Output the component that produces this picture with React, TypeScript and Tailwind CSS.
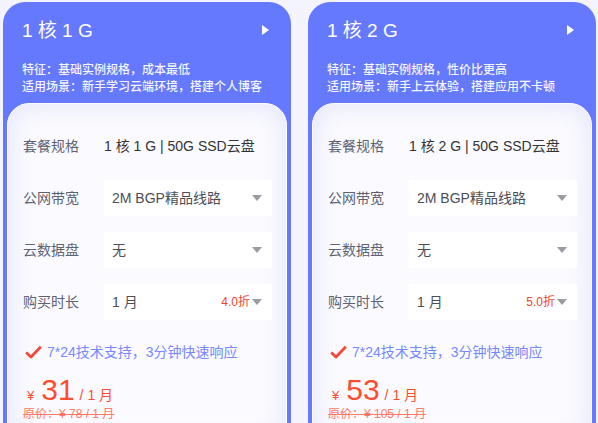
import React from 'react'

interface Plan {
  title: string
  feature: string
  scene: string
  spec: string
  discount: string
  price: string
  original: string
}

const plans: Plan[] = [
  {
    title: '1 核 1 G',
    feature: '特征：基础实例规格，成本最低',
    scene: '适用场景：新手学习云端环境，搭建个人博客',
    spec: '1 核 1 G | 50G SSD云盘',
    discount: '4.0折',
    price: '31',
    original: '原价：¥ 78 / 1 月',
  },
  {
    title: '1 核 2 G',
    feature: '特征：基础实例规格，性价比更高',
    scene: '适用场景：新手上云体验，搭建应用不卡顿',
    spec: '1 核 2 G | 50G SSD云盘',
    discount: '5.0折',
    price: '53',
    original: '原价：¥ 105 / 1 月',
  },
]

function Caret() {
  return (
    <svg width="10" height="6" viewBox="0 0 10 6" className="shrink-0">
      <path d="M0 0 L10 0 L5 6 Z" fill="#9a9ca3" />
    </svg>
  )
}

function SelectBox({ value, extra }: { value: string; extra?: string }) {
  return (
    <div className="flex items-center w-[168px] h-[36px] bg-white pl-[8px] pr-[10px]">
      <span className="flex-1 text-[14px] text-[#4b4e57]">{value}</span>
      {extra && <span className="text-[12px] text-[#f0432f] mr-[2px]">{extra}</span>}
      <Caret />
    </div>
  )
}

function Row({ label, children }: { label: string; children: React.ReactNode }) {
  return (
    <div className="flex items-center h-[36px]">
      <span className="w-[81px] text-[14px] text-[#5d6275]">{label}</span>
      {children}
    </div>
  )
}

function PlanCard({ plan }: { plan: Plan }) {
  return (
    <div className="flex-1 bg-[#6579fe] rounded-t-[22px] px-[4px] flex flex-col">
      <div className="relative pt-[15px] pl-[15px] pb-[7px] text-white">
        <div className="text-[19px] leading-[28px]">{plan.title}</div>
        <svg width="7" height="10" viewBox="0 0 7 10" className="absolute right-[18px] top-[23px]">
          <path d="M0 0 L7 5 L0 10 Z" fill="#ffffff" />
        </svg>
        <div className="mt-[17px] text-[12px] leading-[17px] font-medium text-white/95">
          <div>{plan.feature}</div>
          <div>{plan.scene}</div>
        </div>
      </div>
      <div className="flex-1 rounded-t-[22px] border border-white bg-[#fbfbff] shadow-[inset_0_0_28px_rgba(110,115,230,0.18)] pt-[24px] pl-[15px] pr-[14px] pb-[20px]">
        <div className="flex flex-col gap-[16px]">
          <Row label="套餐规格">
            <span className="text-[14px] text-[#333]">{plan.spec}</span>
          </Row>
          <Row label="公网带宽">
            <SelectBox value="2M BGP精品线路" />
          </Row>
          <Row label="云数据盘">
            <SelectBox value="无" />
          </Row>
          <Row label="购买时长">
            <SelectBox value="1 月" extra={plan.discount} />
          </Row>
        </div>
        <div className="flex items-center mt-[22px] h-[20px]">
          <svg width="17" height="14" viewBox="0 0 17 14" className="ml-[2px] mr-[5px]">
            <path d="M1.2 7.5 L6 12 L15.8 1.8" stroke="#f4483a" strokeWidth="2.8" fill="none" strokeLinejoin="round" />
          </svg>
          <span className="text-[14px] text-[#7788ff]">7*24技术支持，3分钟快速响应</span>
        </div>
        <div className="flex items-baseline mt-[12px] pl-[4px] text-[#ff4b2f]">
          <span className="text-[13px] mr-[7px]">¥</span>
          <span className="text-[30px] leading-[32px]">{plan.price}</span>
          <span className="text-[14px] ml-[5px]">/ 1 月</span>
        </div>
        <div className="text-[12px] leading-[16px] text-[#ff7a66] line-through">{plan.original}</div>
      </div>
    </div>
  )
}

export default function App() {
  return (
    <div
      className="w-[598px] h-[423px] overflow-hidden bg-[#f4f4fe] flex gap-[17px] px-[3px] pt-[2px]"
      style={{ fontFamily: '"Liberation Sans", "Noto Sans CJK SC", sans-serif' }}
    >
      {plans.map(p => (
        <PlanCard key={p.title} plan={p} />
      ))}
    </div>
  )
}
